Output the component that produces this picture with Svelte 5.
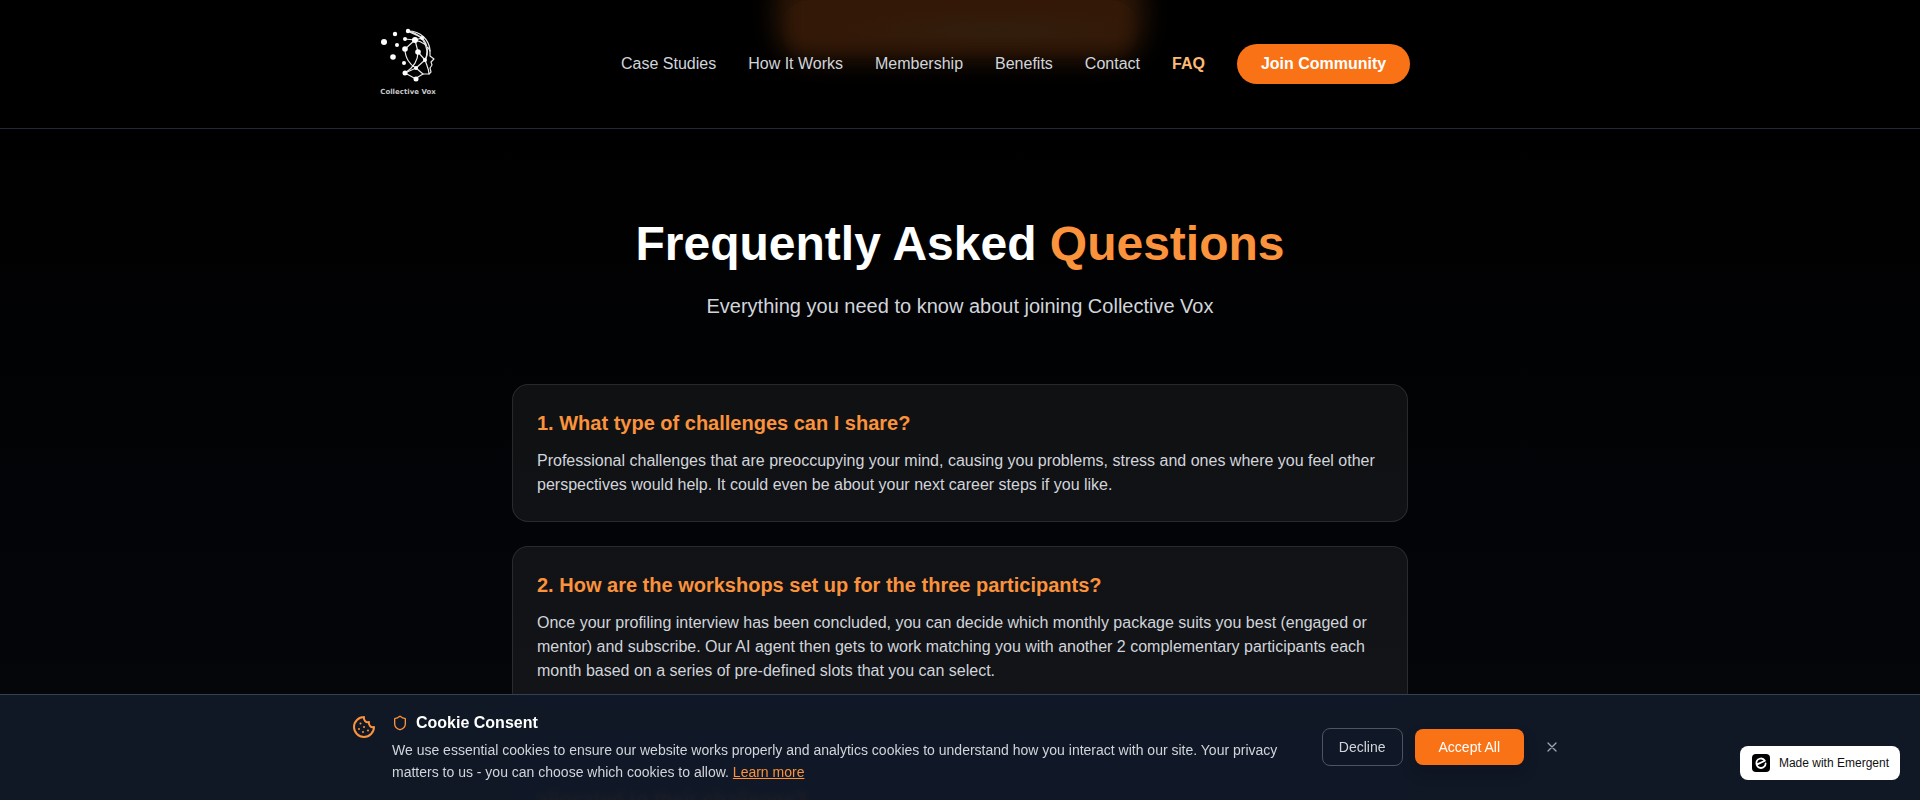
<script>
  const links = ['Case Studies', 'How It Works', 'Membership', 'Benefits', 'Contact'];
  const faqs = [
    {
      q: '1. What type of challenges can I share?',
      a: 'Professional challenges that are preoccupying your mind, causing you problems, stress and ones where you feel other perspectives would help. It could even be about your next career steps if you like.'
    },
    {
      q: '2. How are the workshops set up for the three participants?',
      a: 'Once your profiling interview has been concluded, you can decide which monthly package suits you best (engaged or mentor) and subscribe. Our AI agent then gets to work matching you with another 2 complementary participants each month based on a series of pre-defined slots that you can select.'
    }
  ];
  let consentOpen = $state(true);
  const close = () => (consentOpen = false);
</script>

<div class="page">
  <header>
    <div class="glow" aria-hidden="true"></div>
    <div class="bar">
      <a class="logo" href="#home" aria-label="Collective Vox">
        <svg viewBox="0 0 80 80" aria-hidden="true">
          <g transform="translate(0 -4)">
            <g fill="none" stroke="#e8e8e8" stroke-width="1.2" stroke-linecap="round" stroke-linejoin="round">
              <path d="M40 11C53 11 61 20 62 30L62 36L66 39L63 42L64 45L62 48L63 52L61 54H55L50 57L48 59L37 53" />
              <path d="M40 11C50 13 57 20 59 31C59 36 58 38 57 40" />
              <path d="M40 11C45 14 52 16 54 18L47 20L37 19M37 29L47 20L50 32L57 40L48 48L37 53" />
              <path d="M47 20C55 22 60 26 62 31M37 29C37 38 42 45 48 48L55 54M50 32C50 42 45 48 37 53M57 40C59 46 61 49 61 54M54 18C60 24 61 34 57 40" />
            </g>
            <g fill="#fff">
              <circle cx="16" cy="22" r="3" /><circle cx="27" cy="14" r="2.2" /><circle cx="29" cy="25" r="2" />
              <circle cx="25" cy="37" r="2.8" /><circle cx="36" cy="43" r="2" /><circle cx="37" cy="19" r="2" />
              <circle cx="40" cy="11" r="2.2" /><circle cx="47" cy="20" r="3" /><circle cx="54" cy="18" r="2" />
              <circle cx="37" cy="29" r="2.8" /><circle cx="50" cy="32" r="2.8" /><circle cx="57" cy="40" r="2" />
              <circle cx="48" cy="48" r="2" /><circle cx="37" cy="53" r="2.5" /><circle cx="48" cy="59" r="2.5" />
            </g>
          </g>
          <text x="40" y="70" text-anchor="middle">Collective Vox</text>
        </svg>
      </a>
      <nav>
        {#each links as link}
          <a href="#top">{link}</a>
        {/each}
        <a class="current" href="#faq">FAQ</a>
        <button class="join">Join Community</button>
      </nav>
    </div>
  </header>

  <main>
    <h1>Frequently Asked <span>Questions</span></h1>
    <p class="lead">Everything you need to know about joining Collective Vox</p>
    <div class="list">
      {#each faqs as item}
        <article>
          <h2>{item.q}</h2>
          <p>{item.a}</p>
        </article>
      {/each}
      <article>
        <h2><br />allocated to their challenge?</h2>
      </article>
    </div>
  </main>

  {#if consentOpen}
    <section class="consent" aria-label="Cookie Consent">
      <div class="inner">
        <svg class="cookie" viewBox="0 0 24 24" aria-hidden="true">
          <path d="M12 2a10 10 0 1 0 10 10 4 4 0 0 1-5-5 4 4 0 0 1-5-5" />
          <path d="M8.5 8.5v.01M16 15.5v.01M12 12v.01M11 17v.01M7 14v.01" />
        </svg>
        <div class="copy">
          <h3>
            <svg class="shield" viewBox="0 0 24 24" aria-hidden="true">
              <path d="M20 13c0 5-3.5 7.5-7.66 8.95a1 1 0 0 1-.67-.01C7.5 20.5 4 18 4 13V6a1 1 0 0 1 1-1c2 0 4.5-1.2 6.24-2.72a1.17 1.17 0 0 1 1.52 0C14.51 3.81 17 5 19 5a1 1 0 0 1 1 1z" />
            </svg>
            Cookie Consent
          </h3>
          <p>
            We use essential cookies to ensure our website works properly and analytics cookies to understand how you interact with our site. Your privacy matters to us - you can choose which cookies to allow. <a href="#privacy">Learn more</a>
          </p>
        </div>
        <div class="actions">
          <button class="decline" onclick={close}>Decline</button>
          <button class="accept" onclick={close}>Accept All</button>
          <button class="close" aria-label="Close" onclick={close}>
            <svg viewBox="0 0 24 24" aria-hidden="true"><path d="M18 6 6 18M6 6l12 12" /></svg>
          </button>
        </div>
      </div>
    </section>
  {/if}

  <a class="badge" href="#emergent">
    <svg viewBox="0 0 20 20" aria-hidden="true">
      <rect x="1" y="1" width="18" height="18" rx="4" fill="#000" />
      <path d="M6.200 11.400 13.900 7.700A4.600 4.600 0 0 0 5.400 10.300A4.600 4.600 0 0 0 14.600 10.500" fill="none" stroke="#fff" stroke-width="1.8" stroke-linecap="round" stroke-linejoin="round" />
    </svg>
    Made with Emergent
  </a>
</div>

<style>
  :global(body) {
    margin: 0;
    background: #000;
  }
  .page {
    position: relative;
    height: 100vh;
    overflow: hidden;
    background: linear-gradient(to bottom, #000 0%, #000 16%, #05070c 100%);
    color: #fff;
    font-family: "Liberation Sans", Arial, sans-serif;
    font-size: 16px;
    line-height: 24px;
  }
  a {
    color: inherit;
    text-decoration: none;
  }
  button {
    border: 0;
    margin: 0;
    font: inherit;
    cursor: pointer;
  }
  header {
    position: relative;
    border-bottom: 1px solid #1e293b;
    background: #000;
  }
  .glow {
    position: absolute;
    top: 0;
    left: 50%;
    width: 368px;
    height: 60px;
    margin-left: -184px;
  }
  .glow::before,
  .glow::after {
    content: "";
    position: absolute;
    inset: -32px 0 0;
    border-radius: 32px;
    background: #2c1606;
    filter: blur(12px);
  }
  .glow::after {
    inset: 0 4px;
    background: radial-gradient(ellipse at 60% 50%, rgba(54, 36, 18, 0.6), rgba(58, 27, 8, 0.6) 50%);
    filter: none;
    mask-image: linear-gradient(to bottom, #000 60%, transparent), linear-gradient(to right, transparent, #000 24px, #000 calc(100% - 24px), transparent);
    mask-composite: intersect;
  }
  .bar {
    position: relative;
    display: flex;
    align-items: center;
    gap: 173px;
    max-width: 1184px;
    height: 128px;
    margin: 0 auto;
  }
  .logo,
  .logo svg {
    display: block;
    width: 80px;
    height: 80px;
  }
  .logo text {
    fill: #c8c8c8;
    font: 700 7px "DejaVu Sans", sans-serif;
  }
  nav {
    display: flex;
    align-items: center;
    gap: 32px;
    color: #d1d5db;
    white-space: nowrap;
  }
  .current {
    color: #fdba74;
    font-weight: 700;
  }
  .join {
    padding: 8px 24px;
    border-radius: 20px;
    background: #f97316;
    color: #fff;
    font-weight: 700;
  }
  main {
    max-width: 896px;
    margin: 0 auto;
    padding-top: 85px;
    text-align: center;
  }
  h1 {
    margin: 0 0 18px;
    font-size: 48px;
    line-height: 60px;
  }
  h1 span,
  h2 {
    color: #fb923c;
  }
  .lead {
    margin: 0 0 64px;
    color: #d1d5db;
    font-size: 20px;
    line-height: 28px;
  }
  .list {
    display: grid;
    gap: 24px;
    text-align: left;
  }
  article {
    padding: 24px;
    border: 1px solid rgba(255, 255, 255, 0.1);
    border-radius: 16px;
    background: rgba(255, 255, 255, 0.06);
  }
  h2 {
    margin: 0 0 12px;
    font-size: 20px;
    line-height: 28px;
  }
  article p {
    margin: 0;
    color: #d1d5db;
  }
  .consent {
    position: fixed;
    inset: auto 0 0;
    border-top: 1px solid #334155;
    background: rgba(17, 24, 39, 0.96);
    backdrop-filter: blur(2px);
  }
  .inner {
    display: flex;
    align-items: center;
    gap: 16px;
    max-width: 1216px;
    margin: 0 auto;
    padding: 16px 0 17px;
  }
  .inner svg {
    fill: none;
    stroke: #fb923c;
    stroke-width: 2;
    stroke-linecap: round;
    stroke-linejoin: round;
  }
  .cookie {
    flex: none;
    align-self: flex-start;
    width: 24px;
    height: 24px;
    padding-top: 4px;
  }
  .copy {
    flex: 1;
  }
  h3 {
    display: flex;
    align-items: center;
    gap: 8px;
    margin: 0 0 4px;
    font-size: 16px;
  }
  .shield {
    width: 16px;
    height: 16px;
  }
  .copy p {
    margin: 0;
    color: #d1d5db;
    font-size: 14px;
    line-height: 22px;
  }
  .copy a {
    color: #fb923c;
    text-decoration: underline;
  }
  .actions {
    display: flex;
    align-items: center;
    gap: 12px;
    margin-left: 16px;
    font-size: 14px;
    line-height: 20px;
  }
  .decline {
    padding: 8px 16px;
    border: 1px solid #4b5563;
    border-radius: 8px;
    background: transparent;
    color: #d1d5db;
  }
  .accept {
    padding: 8px 24px;
    border-radius: 8px;
    background: #f97316;
    color: #fff;
    box-shadow: 0 8px 16px rgba(0, 0, 0, 0.15);
  }
  .close {
    display: flex;
    padding: 8px;
    background: transparent;
  }
  .close svg {
    width: 16px;
    height: 16px;
    stroke: #9ca3af;
  }
  .badge {
    position: fixed;
    right: 20px;
    bottom: 20px;
    display: flex;
    align-items: center;
    gap: 8px;
    height: 34px;
    padding: 0 11px;
    border-radius: 8px;
    background: #fff;
    color: #111;
    font-size: 12px;
    line-height: 16px;
  }
  .badge svg {
    width: 20px;
    height: 20px;
  }
</style>
